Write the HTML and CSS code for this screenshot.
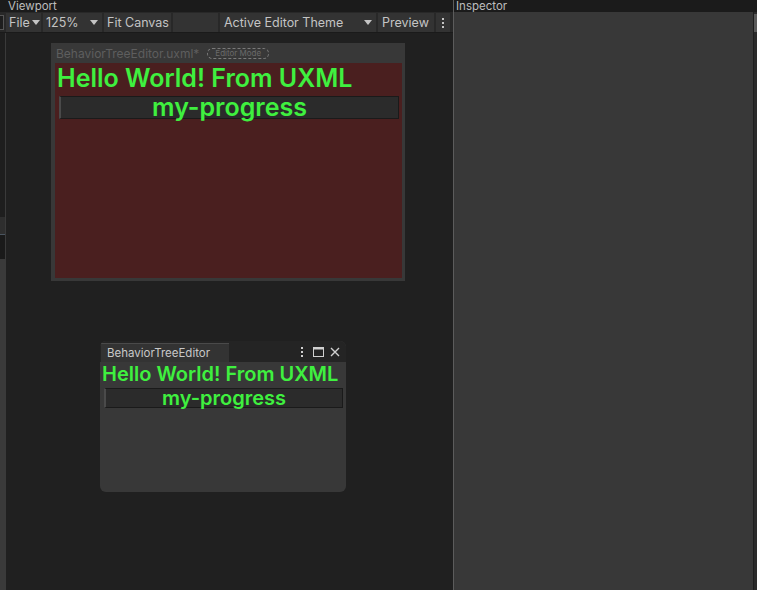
FILE: index.html
```html
<!DOCTYPE html>
<html>
<head>
<meta charset="utf-8">
<link rel="stylesheet" href="styles.css">
</head>
<body>
<div class="app">
  <section class="viewport">
    <div class="panel-header">Viewport</div>
    <div class="toolbar">
      <div class="tb-edge"></div>
      <div class="tb-item tb-file">File<span class="caret"></span></div>
      <div class="tb-item tb-zoom">125%<span class="caret"></span></div>
      <div class="tb-item tb-fit">Fit Canvas</div>
      <div class="tb-item tb-blank"></div>
      <div class="tb-item tb-theme">Active Editor Theme<span class="caret"></span></div>
      <div class="tb-item tb-preview">Preview</div>
      <div class="tb-item tb-more"><span class="dots"><i></i><i></i><i></i></span></div>
    </div>
    <div class="canvas-row">
      <div class="left-strip">
        <div class="ls-a"></div>
        <div class="ls-b"></div>
        <div class="ls-c"></div>
        <div class="ls-d"></div>
      </div>
      <div class="canvas">
        <div class="doc">
          <div class="doc-title">
            <span class="doc-name">BehaviorTreeEditor.uxml*</span>
            <span class="mode-pill">Editor Mode</span>
          </div>
          <div class="doc-body">
            <div class="hello big">Hello World! From UXML</div>
            <div class="progress big-bar"><span>my-progress</span></div>
          </div>
        </div>
        <div class="window">
          <div class="win-titlebar">
            <div class="win-tab">BehaviorTreeEditor</div>
            <div class="win-icons">
              <span class="dots small"><i></i><i></i><i></i></span>
              <svg width="11" height="10" viewBox="0 0 11 10"><rect x="0.5" y="0.5" width="10" height="9" fill="none" stroke="#d0d0d0"/><rect x="0.5" y="0.5" width="10" height="2" fill="#d0d0d0"/></svg>
              <svg width="10" height="10" viewBox="0 0 10 10"><path d="M1 1 L9 9 M9 1 L1 9" stroke="#d0d0d0" stroke-width="1.4"/></svg>
            </div>
          </div>
          <div class="win-body">
            <div class="hello small-text">Hello World! From UXML</div>
            <div class="progress small-bar"><span>my-progress</span></div>
          </div>
        </div>
      </div>
    </div>
  </section>
  <div class="divider"></div>
  <section class="inspector">
    <div class="panel-header">Inspector</div>
    <div class="insp-body">
      <div class="insp-main"></div>
      <div class="insp-edge"><div class="insp-thumb"></div></div>
    </div>
  </section>
</div>
</body>
</html>
```
FILE: styles.css
```css
* { box-sizing: border-box; }
html, body { margin: 0; padding: 0; }
body {
  width: 757px;
  height: 590px;
  overflow: hidden;
  background: #202020;
  font-family: Inter, "Noto Sans", sans-serif;
}
.app {
  display: flex;
  width: 757px;
  height: 590px;
}
.viewport {
  width: 453px;
  display: flex;
  flex-direction: column;
  background: #202020;
}
.panel-header {
  height: 12px;
  background: #1b1b1b;
  color: #bdbdbd;
  font-size: 11.5px;
  line-height: 12px;
  padding-left: 8px;
}
.toolbar {
  height: 21px;
  display: flex;
  align-items: stretch;
  background: #282828;
  border-bottom: 1px solid #1a1a1a;
  gap: 2px;
  padding-top: 1px;
}
.tb-edge {
  width: 4px;
  background: #1e1e1e;
  border: 1px solid #555;
  border-left: none;
  margin: 2px 0;
}
.tb-item {
  background: #333333;
  color: #c4c4c4;
  font-size: 12.5px;
  display: flex;
  align-items: center;
  padding: 0 3px;
  white-space: nowrap;
}
.caret {
  display: inline-block;
  width: 0;
  height: 0;
  border-left: 4px solid transparent;
  border-right: 4px solid transparent;
  border-top: 5px solid #c4c4c4;
  margin-left: 2px;
}
.tb-file { width: 35px; padding-left: 3px; }
.tb-zoom { width: 59px; justify-content: space-between; padding-right: 4px; }
.tb-fit { width: 67px; }
.tb-blank { width: 45px; }
.tb-theme { width: 156px; justify-content: space-between; padding-left: 4px; padding-right: 4px; }
.tb-preview { width: 56px; padding-left: 4px; }
.tb-more { width: 14px; justify-content: center; }
.dots { display: inline-flex; flex-direction: column; gap: 2px; }
.dots i { display: block; width: 2px; height: 2px; background: #c4c4c4; }
.dots.small i { background: #d0d0d0; }
.canvas-row {
  flex: 1;
  display: flex;
}
.left-strip {
  width: 6px;
  display: flex;
  flex-direction: column;
  border-right: 1px solid #3a3a3a;
}
.ls-a { height: 184px; background: #1e1e1e; }
.ls-b { height: 18px; background: #2e2e2e; border-bottom: 1px solid #4a5560; }
.ls-c { height: 24px; background: #1a1a1a; }
.ls-d { flex: 1; background: #3a3a3a; }
.canvas {
  flex: 1;
  position: relative;
  background: #202020;
}
.doc {
  position: absolute;
  left: 45px;
  top: 10px;
  width: 354px;
  height: 238px;
  background: #383838;
  padding: 0 3px 3px 4px;
  display: flex;
  flex-direction: column;
}
.doc-title {
  height: 20px;
  display: flex;
  align-items: center;
  gap: 8px;
  padding-left: 1px;
}
.doc-name {
  color: #5e5e5e;
  font-size: 12px;
}
.mode-pill {
  color: #6a6a6a;
  font-size: 8px;
  border: 1px dashed #7a7a7a;
  border-radius: 6px;
  padding: 0 7px;
  line-height: 9px;
}
.doc-body {
  flex: 1;
  background: #4a1f1f;
  padding: 1px 3px 0 2px;
}
.hello {
  color: #3ff03f;
  font-weight: 600;
  white-space: nowrap;
}
.hello.big {
  font-size: 25px;
  line-height: 29px;
}
.progress {
  background: #2b2b2b;
  border: 1px solid #1a1a1a;
  border-left: 2px solid #4a4a4a;
  display: flex;
  justify-content: center;
  align-items: center;
}
.progress span {
  color: #3ff03f;
  font-weight: 600;
}
.big-bar {
  height: 23px;
  margin: 3px 0 0 2px;
}
.big-bar span { font-size: 25px; line-height: 23px; }
.window {
  position: absolute;
  left: 94px;
  top: 308px;
  width: 246px;
  height: 151px;
  background: #383838;
  border-radius: 6px;
  overflow: hidden;
  display: flex;
  flex-direction: column;
}
.win-titlebar {
  height: 21px;
  background: #242424;
  display: flex;
  justify-content: space-between;
  align-items: flex-end;
  padding-left: 1px;
}
.win-tab {
  width: 128px;
  height: 19px;
  background: #333333;
  border-top: 1px solid #4a4a4a;
  color: #c8c8c8;
  font-size: 11.5px;
  line-height: 18px;
  padding-left: 6px;
}
.win-icons {
  display: flex;
  align-items: center;
  gap: 6px;
  height: 20px;
  padding-right: 6px;
}
.win-icons .dots { margin-right: 4px; }
.win-body {
  flex: 1;
  padding: 1px 3px 0 2px;
}
.hello.small-text {
  font-size: 20px;
  line-height: 23px;
}
.small-bar {
  height: 20px;
  margin: 2px 0 0 2px;
}
.small-bar span { font-size: 20px; line-height: 20px; }
.divider {
  width: 1px;
  background: #5c5c5c;
}
.inspector {
  flex: 1;
  display: flex;
  flex-direction: column;
  background: #383838;
}
.inspector .panel-header { padding-left: 2px; }
.insp-body {
  flex: 1;
  display: flex;
}
.insp-main { flex: 1; background: #383838; }
.insp-edge {
  width: 4px;
  background: #2a2a2a;
  border-left: 1px solid #1e1e1e;
}
.insp-thumb {
  height: 18px;
  margin-top: 2px;
  background: #5a5a5a;
}
```
